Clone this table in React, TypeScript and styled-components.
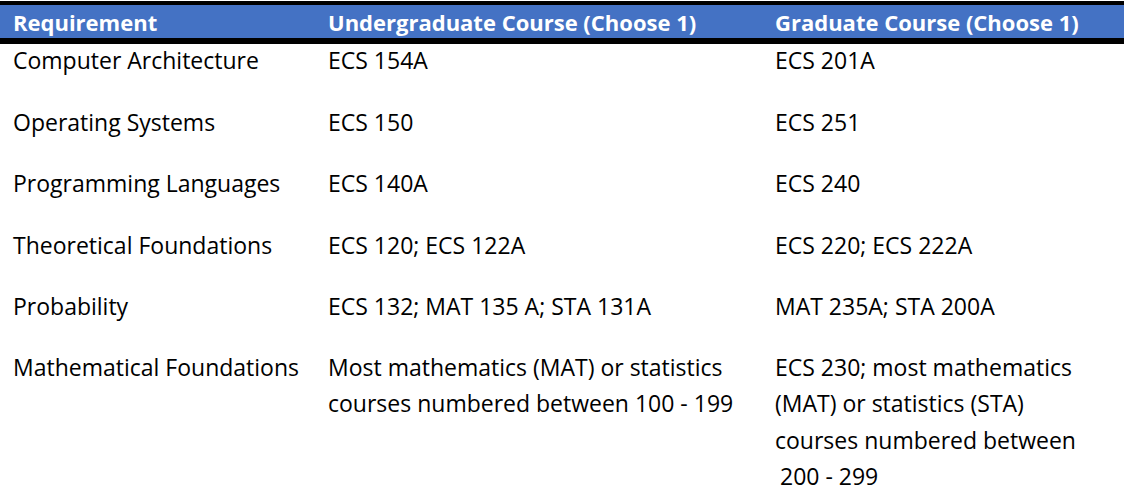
import React from "react";
import styled, { createGlobalStyle } from "styled-components";

const GlobalStyle = createGlobalStyle`
  html, body {
    margin: 0;
    padding: 0;
    background: #ffffff;
  }
  body {
    font-family: "Open Sans", "Liberation Sans", sans-serif;
    color: #000000;
  }
`;

const Table = styled.div`
  width: 1124px;
  margin-top: 1px;
  display: grid;
  grid-template-columns: 315px 447px 1fr;
`;

const HeaderCell = styled.div`
  background: #4472c4;
  border-top: 4px solid #000000;
  border-bottom: 6px solid #000000;
  height: 33px;
  display: flex;
  align-items: center;
  padding-left: 13px;
  color: #ffffff;
  font-weight: 700;
  font-size: 22px;
  white-space: nowrap;
`;

const Cell = styled.div<{ $first?: boolean; $last?: boolean }>`
  padding-left: 13px;
  font-size: 23px;
  line-height: 36.5px;
  white-space: nowrap;
  min-height: ${(p) => (p.$last ? "auto" : p.$first ? "62.2px" : "61.2px")};
  margin-top: ${(p) => (p.$first ? "-2px" : "0")};
  box-sizing: border-box;
`;

const Indent = styled.span`
  padding-left: 5px;
`;

type Row = { req: string; ug: React.ReactNode; grad: React.ReactNode };

const rows: Row[] = [
  { req: "Computer Architecture", ug: "ECS 154A", grad: "ECS 201A" },
  { req: "Operating Systems", ug: "ECS 150", grad: "ECS 251" },
  { req: "Programming Languages", ug: "ECS 140A", grad: "ECS 240" },
  { req: "Theoretical Foundations", ug: "ECS 120; ECS 122A", grad: "ECS 220; ECS 222A" },
  { req: "Probability", ug: "ECS 132; MAT 135 A; STA 131A", grad: "MAT 235A; STA 200A" },
  {
    req: "Mathematical Foundations",
    ug: (
      <>
        Most mathematics (MAT) or statistics
        <br />
        courses numbered between 100 - 199
      </>
    ),
    grad: (
      <>
        ECS 230; most mathematics
        <br />
        (MAT) or statistics (STA)
        <br />
        courses numbered between
        <br />
        <Indent>200 - 299</Indent>
      </>
    ),
  },
];

export default function App() {
  return (
    <>
      <GlobalStyle />
      <Table>
        <HeaderCell>Requirement</HeaderCell>
        <HeaderCell>Undergraduate Course (Choose 1)</HeaderCell>
        <HeaderCell>Graduate Course (Choose 1)</HeaderCell>
        {rows.map((r, i) => {
          const last = i === rows.length - 1;
          const first = i === 0;
          return (
            <React.Fragment key={r.req}>
              <Cell $first={first} $last={last}>{r.req}</Cell>
              <Cell $first={first} $last={last}>{r.ug}</Cell>
              <Cell $first={first} $last={last}>{r.grad}</Cell>
            </React.Fragment>
          );
        })}
      </Table>
    </>
  );
}
